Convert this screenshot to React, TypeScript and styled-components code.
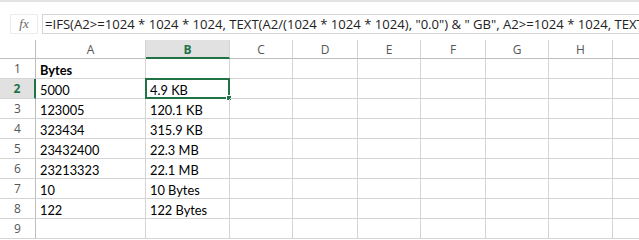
import styled, { createGlobalStyle } from "styled-components";

const GlobalStyle = createGlobalStyle`
  html, body {
    margin: 0;
    padding: 0;
    background: #ffffff;
  }
  * {
    box-sizing: border-box;
  }
`;

const EXCEL_GREEN = "#217346";
const GRID = "#d4d4d4";
const HEAD_LINE = "#bdbdbd";

const COLS = [
  { key: "A", width: 110 },
  { key: "B", width: 84 },
  { key: "C", width: 63 },
  { key: "D", width: 65 },
  { key: "E", width: 63 },
  { key: "F", width: 65 },
  { key: "G", width: 63 },
  { key: "H", width: 64 },
  { key: "I", width: 64 },
];

const FORMULA =
  '=IFS(A2>=1024 * 1024 * 1024, TEXT(A2/(1024 * 1024 * 1024), "0.0") & " GB", A2>=1024 * 1024, TEXT(A2/(1024 * 1024), "0.0") & " MB", A2>=1024, TEXT(A2/1024, "0.0") & " KB", TRUE, A2 & " Bytes")';

const rows: [string, string][] = [
  ["Bytes", ""],
  ["5000", "4.9 KB"],
  ["123005", "120.1 KB"],
  ["323434", "315.9 KB"],
  ["23432400", "22.3 MB"],
  ["23213323", "22.1 MB"],
  ["10", "10 Bytes"],
  ["122", "122 Bytes"],
  ["", ""],
];

const Page = styled.div`
  width: 639px;
  height: 240px;
  overflow: hidden;
  background: #fff;
  border-top: 2px solid #e3e3e3;
`;

const FormulaBar = styled.div`
  display: flex;
  align-items: center;
  height: 38px;
  padding: 6px 0 0 10px;
  gap: 4px;
`;

const FxBox = styled.div`
  width: 28px;
  height: 20px;
  border: 1px solid #ececec;
  display: flex;
  align-items: center;
  justify-content: center;
  font-family: "Liberation Serif", "DejaVu Serif", serif;
  font-style: italic;
  font-size: 13px;
  color: #666;
`;

const FormulaInput = styled.div`
  flex: 1;
  height: 20px;
  border: 1px solid ${GRID};
  border-right: none;
  padding: 0 0 0 2px;
  font-family: "Open Sans", "Noto Sans", sans-serif;
  font-size: 13.1px;
  line-height: 18px;
  color: #222;
  white-space: nowrap;
  overflow: hidden;
`;

const Sheet = styled.div`
  display: grid;
  grid-template-columns: 36px ${COLS.map((c) => `${c.width}px`).join(" ")};
  grid-template-rows: 19px repeat(9, 20px);
`;

const Corner = styled.div`
  border-right: 1px solid ${HEAD_LINE};
  border-bottom: 1px solid ${HEAD_LINE};
`;

const ColHead = styled.div<{ $active?: boolean }>`
  display: flex;
  align-items: center;
  justify-content: center;
  font-family: "Open Sans", "Noto Sans", sans-serif;
  font-size: 12px;
  color: ${(p) => (p.$active ? EXCEL_GREEN : "#555")};
  font-weight: ${(p) => (p.$active ? 700 : 400)};
  background: ${(p) => (p.$active ? "#e1e1e1" : "#fff")};
  border-right: 1px solid ${GRID};
  border-bottom: ${(p) => (p.$active ? `2px solid ${EXCEL_GREEN}` : `1px solid ${HEAD_LINE}`)};
  padding-top: ${(p) => (p.$active ? "1px" : "0")};
`;

const RowHead = styled.div<{ $active?: boolean }>`
  display: flex;
  align-items: center;
  justify-content: center;
  font-family: "Open Sans", "Noto Sans", sans-serif;
  font-size: 12px;
  color: ${(p) => (p.$active ? EXCEL_GREEN : "#555")};
  font-weight: ${(p) => (p.$active ? 700 : 400)};
  background: ${(p) => (p.$active ? "#e1e1e1" : "#fff")};
  border-right: ${(p) => (p.$active ? `2px solid ${EXCEL_GREEN}` : `1px solid ${HEAD_LINE}`)};
  border-bottom: 1px solid ${GRID};
`;

const Cell = styled.div<{ $bold?: boolean }>`
  position: relative;
  display: flex;
  align-items: center;
  padding: 2px 0 0 4px;
  font-family: "Lato", "Liberation Sans", sans-serif;
  font-size: 12.8px;
  font-weight: ${(p) => (p.$bold ? 700 : 400)};
  color: #000;
  white-space: nowrap;
  border-right: 1px solid ${GRID};
  border-bottom: 1px solid ${GRID};
`;

const Selection = styled.div`
  position: absolute;
  left: -1px;
  top: -1px;
  right: -1px;
  bottom: -1px;
  border: 2px solid ${EXCEL_GREEN};
  pointer-events: none;
`;

const Handle = styled.div`
  position: absolute;
  right: -4px;
  bottom: -4px;
  width: 6px;
  height: 6px;
  background: ${EXCEL_GREEN};
  border: 1px solid #fff;
`;

export default function App() {
  return (
    <>
      <GlobalStyle />
      <Page>
        <FormulaBar>
          <FxBox>fx</FxBox>
          <FormulaInput>{FORMULA}</FormulaInput>
        </FormulaBar>
        <Sheet>
          <Corner />
          {COLS.map((c) => (
            <ColHead key={c.key} $active={c.key === "B"}>
              {c.key === "I" ? "" : c.key}
            </ColHead>
          ))}
          {rows.map(([a, b], i) => {
            const rowNo = i + 1;
            const active = rowNo === 2;
            return [
              <RowHead key={`h${rowNo}`} $active={active}>
                {rowNo}
              </RowHead>,
              ...COLS.map((c) => (
                <Cell key={`${c.key}${rowNo}`} $bold={rowNo === 1 && c.key === "A"}>
                  {c.key === "A" ? a : c.key === "B" ? b : ""}
                  {active && c.key === "B" && (
                    <Selection>
                      <Handle />
                    </Selection>
                  )}
                </Cell>
              )),
            ];
          })}
        </Sheet>
      </Page>
    </>
  );
}
